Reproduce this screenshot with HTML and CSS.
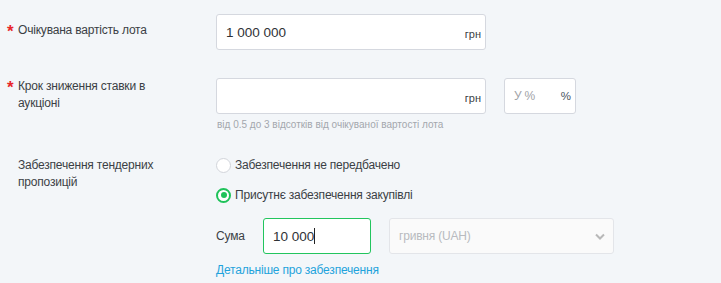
FILE: index.html
```html
<!DOCTYPE html>
<html lang="uk">
<head>
<meta charset="utf-8">
<link rel="stylesheet" href="styles.css">
</head>
<body>
<div class="form">
  <div class="row row-1">
    <div class="label label-1"><span class="star">*</span><span>Очікувана вартість лота</span></div>
    <div class="field">
      <div class="input input-wide"><span class="value">1 000 000</span><span class="suffix">грн</span></div>
    </div>
  </div>

  <div class="row row-2">
    <div class="label label-2"><span class="star">*</span><span>Крок зниження ставки в аукціоні</span></div>
    <div class="field">
      <div class="inline">
        <div class="input input-wide"><span class="value"></span><span class="suffix">грн</span></div>
        <div class="input input-small"><span class="placeholder">У %</span><span class="suffix pct">%</span></div>
      </div>
      <div class="hint">від 0.5 до 3 відсотків від очікуваної вартості лота</div>
    </div>
  </div>

  <div class="row row-3">
    <div class="label label-3"><span class="star empty"></span><span>Забезпечення тендерних пропозицій</span></div>
    <div class="field">
      <div class="radio"><span class="circle"></span><span>Забезпечення не передбачено</span></div>
      <div class="radio"><span class="circle checked"></span><span>Присутнє забезпечення закупівлі</span></div>
      <div class="sum-row">
        <span class="sum-label">Сума</span>
        <div class="input input-sum"><span class="value">10 000</span><span class="caret"></span></div>
        <div class="select"><span>гривня (UAH)</span>
          <svg class="chev" width="10" height="7" viewBox="0 0 10 7"><path d="M1 1.5 L5 5.5 L9 1.5" fill="none" stroke="#b8b8b8" stroke-width="2"/></svg>
        </div>
      </div>
      <a class="link">Детальніше про забезпечення</a>
    </div>
  </div>
</div>
</body>
</html>
```
FILE: styles.css
```css
html, body {
  margin: 0;
  padding: 0;
  background: #f3f6f9;
}
body {
  font-family: "Liberation Sans", Arial, sans-serif;
  font-size: 12px;
  letter-spacing: -0.2px;
  color: #3b3f45;
  width: 721px;
  height: 283px;
  overflow: hidden;
}
.form {
  padding: 14px 0 0 7px;
}
.row {
  display: grid;
  grid-template-columns: 209px 1fr;
}
.row-2 { margin-top: 28px; }
.row-3 { margin-top: 27px; }
.label {
  display: flex;
  line-height: 17px;
  padding-right: 50px;
}
.label-1 { padding-top: 8px; }
.label-2 { padding-top: 0; }
.label-3 { padding-top: 0; }
.star {
  color: #e8262b;
  font-size: 17px;
  font-weight: bold;
  width: 11px;
  flex: none;
  line-height: 17px;
  position: relative;
  top: 1px;
}
.field {
  display: flex;
  flex-direction: column;
  align-items: flex-start;
}
.inline {
  display: flex;
  gap: 18px;
}
.input {
  box-sizing: border-box;
  height: 36px;
  background: #fff;
  border: 1px solid #d5d8df;
  border-radius: 3px;
  display: flex;
  align-items: center;
  justify-content: space-between;
  padding: 0 4px 0 9px;
}
.input-wide { width: 270px; }
.input-small { width: 72px; }
.value {
  font-size: 13.5px;
  letter-spacing: 0;
  color: #2f3236;
}
.suffix {
  font-size: 11px;
  letter-spacing: 0;
  color: #3b3f45;
  margin-top: 3px;
}
.pct { color: #4a5563; font-size: 11.5px; margin-top: 0; }
.placeholder {
  font-size: 12px;
  color: #9fa3a8;
}
.hint {
  margin-top: 5px;
  font-size: 10px;
  letter-spacing: 0;
  color: #a3a7ad;
  padding-left: 1px;
}
.radio {
  display: flex;
  align-items: center;
  gap: 4px;
  height: 16px;
  line-height: 16px;
}
.radio + .radio { margin-top: 14px; }
.circle {
  box-sizing: border-box;
  width: 15px;
  height: 15px;
  border-radius: 50%;
  border: 1px solid #d2d5db;
  background: #fff;
  display: flex;
  align-items: center;
  justify-content: center;
}
.circle.checked {
  border: 2px solid #1fc25a;
}
.circle.checked::after {
  content: "";
  width: 6px;
  height: 6px;
  border-radius: 50%;
  background: #1fc25a;
}
.sum-row {
  display: flex;
  align-items: center;
  margin-top: 15px;
}
.sum-label {
  width: 47px;
}
.input-sum {
  width: 108px;
  border-color: #22c55e;
  justify-content: flex-start;
  padding-left: 9px;
}
.caret {
  width: 1px;
  height: 16px;
  background: #222;
}
.select {
  box-sizing: border-box;
  margin-left: 18px;
  width: 225px;
  height: 36px;
  border: 1px solid #e3e5e9;
  border-radius: 3px;
  background: #fafafa;
  color: #b8bbbf;
  display: flex;
  align-items: center;
  justify-content: space-between;
  padding: 0 8px 0 9px;
}
.link {
  margin-top: 9px;
  color: #1fa3dc;
  cursor: pointer;
}
```
